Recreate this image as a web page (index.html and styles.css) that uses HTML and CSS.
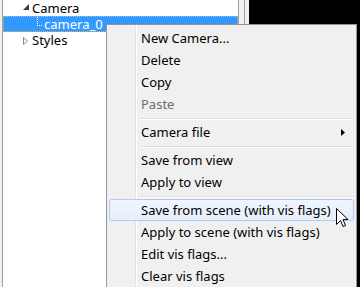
FILE: index.html
```html
<!DOCTYPE html>
<html>
  <head>
    <title>Camera tree</title>
    <link rel="stylesheet" href="styles.css">
  </head>
  <body>
    <div class="window">
      <div class="tree">
        <div class="node">
          <svg class="toggle" width="10" height="16"><polygon points="7,4 7,10 1,10" fill="#3c3c3c"/></svg>
          <span>Camera</span>
        </div>
        <div class="node selected">
          <svg class="branch" width="8" height="14"><line x1="1.5" y1="0" x2="1.5" y2="8" stroke="#fff" stroke-dasharray="1 1"/><line x1="1" y1="8.5" x2="7" y2="8.5" stroke="#fff" stroke-dasharray="1 1"/></svg>
          <span>camera_0</span>
        </div>
        <div class="node">
          <svg class="toggle" width="10" height="16"><polygon points="1.5,5.5 5.5,9 1.5,12.5" fill="#fff" stroke="#8a8a8a"/></svg>
          <span>Styles</span>
        </div>
      </div>
      <div class="splitter"></div>
      <div class="viewport"></div>
    </div>

    <div class="menu">
      <div class="item">New Camera...</div>
      <div class="item">Delete</div>
      <div class="item">Copy</div>
      <div class="item disabled">Paste</div>
      <div class="separator"></div>
      <div class="item">Camera file
        <svg class="submenu" width="4" height="7"><polygon points="0,0 4,3.5 0,7" fill="#000"/></svg>
      </div>
      <div class="separator"></div>
      <div class="item">Save from view</div>
      <div class="item">Apply to view</div>
      <div class="separator"></div>
      <div class="item hover">Save from scene (with vis flags)</div>
      <div class="item">Apply to scene (with vis flags)</div>
      <div class="item">Edit vis flags...</div>
      <div class="item">Clear vis flags</div>
    </div>

    <svg class="cursor" width="13" height="20" viewBox="0 0 13 20">
      <path d="M0.5,0.5 L0.5,16.5 L4.5,12.5 L7,18.5 L9.5,17.5 L7,11.5 L12,11.5 Z" fill="#fff" stroke="#000" stroke-linejoin="miter"/>
    </svg>
  </body>
</html>
```

FILE: styles.css
```css
body {
  margin: 0;
  width: 360px;
  height: 287px;
  overflow: hidden;
  position: relative;
  font-family: "Noto Sans", "Noto Sans CJK JP", sans-serif;
  font-size: 13px;
  color: #000;
  background-color: #f0f0f0;
}
.window {
  display: flex;
  height: 287px;
}
.tree {
  margin-left: 2px;
  width: 235px;
  border-left: 1px solid #a0a0a0;
  border-right: 1px solid #a0a0a0;
  background-color: #fff;
}
.node {
  display: flex;
  align-items: center;
  height: 16px;
  line-height: 16px;
  padding-left: 19px;
  box-sizing: border-box;
}
.toggle {
  display: block;
}
.selected {
  background-color: #3399ff;
  color: #fff;
  padding-left: 32px;
  border: 1px dotted #e8b04c;
  border-top-color: #8fc7ff;
  align-items: flex-start;
  line-height: 14px;
}
.branch {
  display: block;
}
.splitter {
  width: 5px;
  border-right: 1px solid #a0a0a0;
  background-color: #f0f0f0;
}
.viewport {
  margin-left: 4px;
  flex: 1;
  background-color: #000;
}
.menu {
  position: absolute;
  left: 106px;
  top: 24px;
  width: 245px;
  height: 260px;
  padding: 2px 2px 0 2px;
  border: 1px solid #979797;
  border-bottom: none;
  overflow: hidden;
  background: linear-gradient(to right, #f0f0f0 28px, #e2e3e3 28px, #e2e3e3 29px, #fff 29px, #fff 30px, #f0f0f0 30px);
}
.item {
  position: relative;
  display: flex;
  align-items: center;
  height: 22px;
  line-height: 22px;
  padding-left: 32px;
  padding-right: 9px;
  box-sizing: border-box;
}
.disabled {
  color: #6d6d6d;
}
.submenu {
  margin-left: auto;
}
.hover {
  border: 1px solid #aeccf1;
  border-radius: 3px;
  padding-left: 31px;
  background: linear-gradient(#f1f6fd, #e6effa);
}
.separator {
  height: 1px;
  margin: 3px 0 1px 30px;
  background-color: #e0e0e0;
  border-bottom: 1px solid #fff;
}
.cursor {
  position: absolute;
  left: 336px;
  top: 208px;
}
```
